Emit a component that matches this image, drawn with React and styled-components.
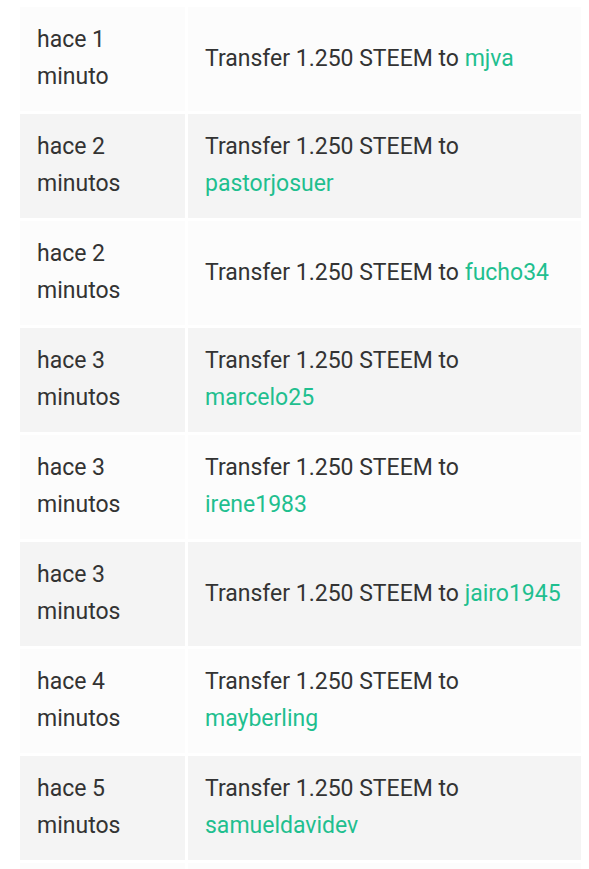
import React from 'react';
import styled, { createGlobalStyle } from 'styled-components';

const GlobalStyle = createGlobalStyle`
  body {
    margin: 0;
    background: #fff;
    font-family: Roboto, "Liberation Sans", sans-serif;
  }
`;

const Page = styled.div`
  padding: 4px 5px 0 17px;
`;

const Table = styled.table`
  border-collapse: separate;
  border-spacing: 3px;
  width: 567px;
  table-layout: fixed;
  font-size: 23px;
  line-height: 37px;
  color: #333;
`;

const Row = styled.tr`
  background: ${(p) => (p.$odd ? '#f4f4f4' : '#fcfcfc')};
`;

const Cell = styled.td`
  width: ${(p) => p.$width}px;
  height: 104px;
  box-sizing: border-box;
  padding: 14px 20px 16px 17px;
  vertical-align: middle;
`;

const Account = styled.a`
  color: #1fbf8f;
  text-decoration: none;
`;

const transfers = [
  { when: 'hace 1 minuto', to: 'mjva' },
  { when: 'hace 2 minutos', to: 'pastorjosuer' },
  { when: 'hace 2 minutos', to: 'fucho34' },
  { when: 'hace 3 minutos', to: 'marcelo25' },
  { when: 'hace 3 minutos', to: 'irene1983' },
  { when: 'hace 3 minutos', to: 'jairo1945' },
  { when: 'hace 4 minutos', to: 'mayberling' },
  { when: 'hace 5 minutos', to: 'samueldavidev' },
];

const App = () => {
  return (
    <Page>
      <GlobalStyle />
      <Table>
        <tbody>
          {transfers.map((t, i) => (
            <Row key={i} $odd={i % 2 === 1}>
              <Cell $width={165}>{t.when}</Cell>
              <Cell $width={393}>
                Transfer 1.250 STEEM to <Account href="#">{t.to}</Account>
              </Cell>
            </Row>
          ))}
          <Row>
            <Cell $width={165} />
            <Cell $width={393} />
          </Row>
        </tbody>
      </Table>
    </Page>
  );
};

export default App;
